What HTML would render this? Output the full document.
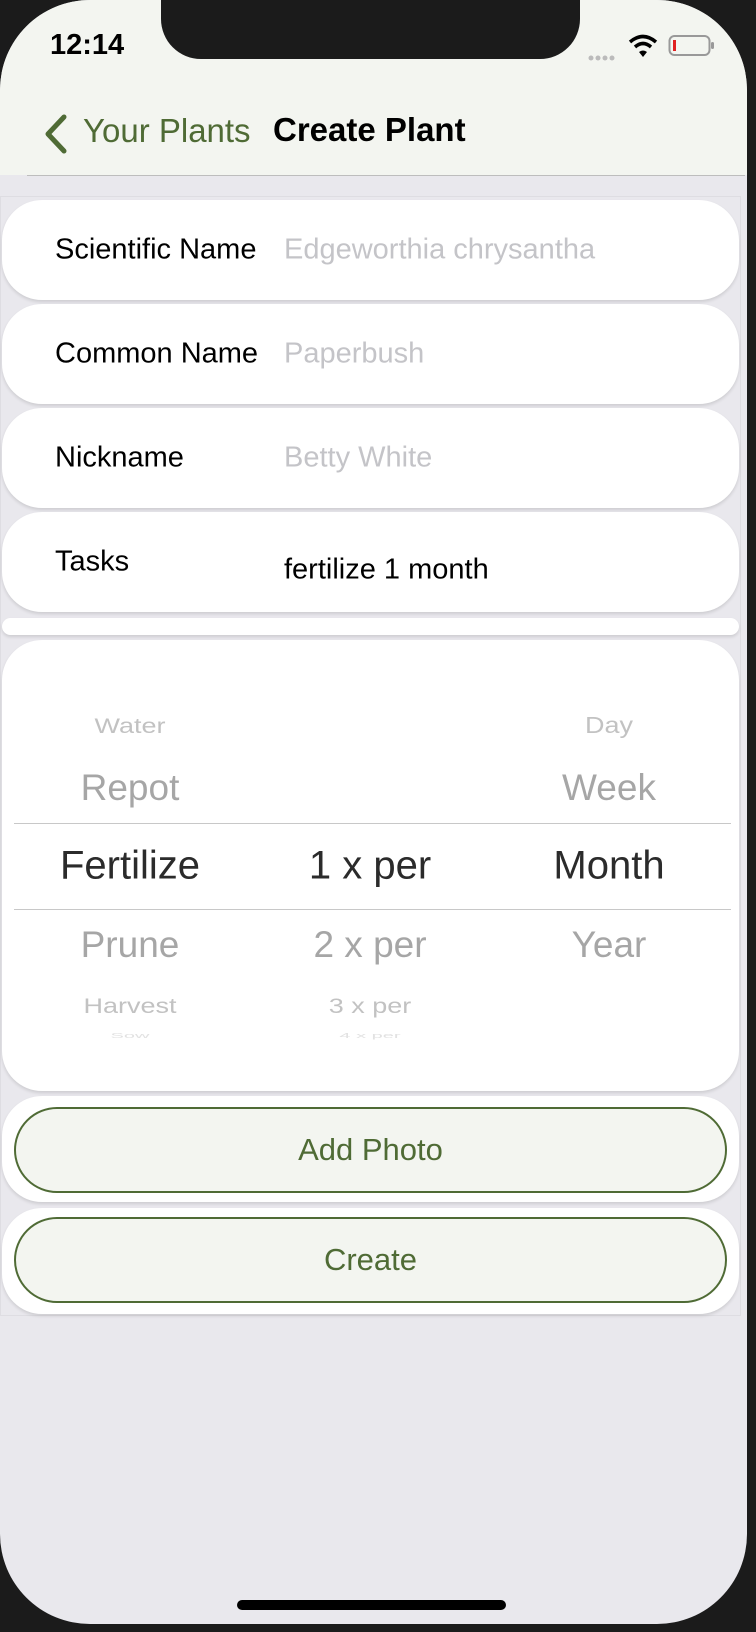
<!DOCTYPE html>
<html><head><meta charset="utf-8"><style>
*{margin:0;padding:0;box-sizing:border-box}
body{width:756px;height:1632px;background:#1b1b1b;position:relative;overflow:hidden;font-family:"Liberation Sans",sans-serif}
.screen{position:absolute;left:0;top:0;width:747px;height:1624px;background:#e9e8ed;border-radius:90px;overflow:hidden}
.nav{position:absolute;left:0;top:0;width:747px;height:175px;background:#f3f5f0}
.sep{position:absolute;left:27px;top:175px;width:718px;height:1px;background:#bdbdbd}
.notch{position:absolute;left:161px;top:-2px;width:419px;height:61px;background:#1b1b1b;border-radius:0 0 40px 40px}
.abs{position:absolute;white-space:nowrap}
.card{position:absolute;left:2px;width:737px;background:#fff;border-radius:40px;box-shadow:0 2px 3px rgba(0,0,0,.12)}
.lbl{position:absolute;left:53px;font-size:29px;color:#000;transform:translateY(-50%)}
.ph{position:absolute;left:282px;font-size:29px;color:#c4c4c8;transform:translateY(-50%)}
.pk{position:absolute;transform:translate(-50%,-50%);white-space:nowrap}
.btn{position:absolute;left:14px;width:713px;height:86px;border:2px solid #4f6b35;border-radius:43px;background:#f3f5f0;color:#4f6b35;font-size:31px;text-align:center;line-height:82px}
.line{position:absolute;left:12px;width:717px;height:1px;background:#c8c8c8}
</style></head><body>
<div class="screen">
 <div class="nav"></div>
 <div class="sep"></div>
 <div class="notch"></div>
 <div class="abs" style="left:50px;top:29px;font-size:29px;font-weight:bold;color:#000">12:14</div>
 <div class="abs" style="left:588px;top:49px;">
  <svg width="28" height="8"><circle cx="3" cy="4" r="2.5" fill="#bbb"/><circle cx="10" cy="4" r="2.5" fill="#bbb"/><circle cx="17" cy="4" r="2.5" fill="#bbb"/><circle cx="24" cy="4" r="2.5" fill="#bbb"/></svg>
 </div>
 <svg class="abs" style="left:628px;top:34px" width="30" height="24" viewBox="0 0 30 24"><path d="M2 8 Q15 -3 28 8" stroke="#000" stroke-width="3.5" fill="none"/><path d="M7 13 Q15 6 23 13" stroke="#000" stroke-width="3.5" fill="none"/><path d="M11 18 L15 23 L19 18 Q15 15 11 18Z" fill="#000"/></svg>
 <svg class="abs" style="left:668px;top:34px" width="48" height="24" viewBox="0 0 48 24"><rect x="1.5" y="2" width="40" height="19" rx="5" fill="none" stroke="#999" stroke-width="2"/><rect x="5" y="6" width="3" height="11" fill="#e02020"/><rect x="43" y="8" width="3" height="7" rx="1.5" fill="#999"/></svg>
 <svg class="abs" style="left:42px;top:114px" width="30" height="40" viewBox="0 0 30 40"><path d="M22 3 L6 20 L22 37" stroke="#4f6b35" stroke-width="5" fill="none" stroke-linecap="round" stroke-linejoin="round"/></svg>
 <div class="abs" style="left:83px;top:112px;font-size:33px;color:#4f6b35">Your Plants</div>
 <div class="abs" style="left:273px;top:111px;font-size:33px;font-weight:bold;color:#000">Create Plant</div>

 <div class="abs" style="left:0;top:196px;width:741px;height:1120px;border:1px solid #dedde2;background:#e9e8ed"></div>
 <div class="card" style="top:200px;height:100px"><div class="lbl" style="top:50px">Scientific Name</div><div class="ph" style="top:50px">Edgeworthia chrysantha</div></div>
 <div class="card" style="top:304px;height:100px"><div class="lbl" style="top:50px">Common Name</div><div class="ph" style="top:50px">Paperbush</div></div>
 <div class="card" style="top:408px;height:100px"><div class="lbl" style="top:50px">Nickname</div><div class="ph" style="top:50px">Betty White</div></div>
 <div class="card" style="top:512px;height:100px"><div class="lbl" style="top:50px">Tasks</div><div class="ph" style="top:58px;color:#000">fertilize 1 month</div></div>
 <div class="card" style="top:618px;height:17px;border-radius:9px"></div>
 <div class="card" style="top:640px;height:451px">
  <div class="line" style="top:183px"></div><div class="line" style="top:269px"></div>
  <div class="pk" style="left:128px;top:86px;font-size:27px;color:#c2c2c2;transform:translate(-50%,-50%) scaleY(.8)">Water</div>
  <div class="pk" style="left:607px;top:86px;font-size:27px;color:#c2c2c2;transform:translate(-50%,-50%) scaleY(.85)">Day</div>
  <div class="pk" style="left:128px;top:148px;font-size:37px;color:#a6a6a6">Repot</div>
  <div class="pk" style="left:607px;top:148px;font-size:37px;color:#a6a6a6">Week</div>
  <div class="pk" style="left:128px;top:226px;font-size:40px;color:#2b2b2b">Fertilize</div>
  <div class="pk" style="left:368px;top:226px;font-size:40px;color:#2b2b2b">1 x per</div>
  <div class="pk" style="left:607px;top:226px;font-size:40px;color:#2b2b2b">Month</div>
  <div class="pk" style="left:128px;top:305px;font-size:37px;color:#a6a6a6">Prune</div>
  <div class="pk" style="left:368px;top:305px;font-size:37px;color:#a6a6a6">2 x per</div>
  <div class="pk" style="left:607px;top:305px;font-size:37px;color:#a6a6a6">Year</div>
  <div class="pk" style="left:128px;top:366px;font-size:27px;color:#c2c2c2;transform:translate(-50%,-50%) scaleY(.8)">Harvest</div>
  <div class="pk" style="left:368px;top:366px;font-size:27px;color:#c2c2c2;transform:translate(-50%,-50%) scaleY(.8)">3 x per</div>
  <div class="pk" style="left:128px;top:396px;font-size:20px;color:#e2e2e2;transform:translate(-50%,-50%) scaleY(.35)">Sow</div>
  <div class="pk" style="left:368px;top:396px;font-size:20px;color:#e2e2e2;transform:translate(-50%,-50%) scaleY(.35)">4 x per</div>
 </div>
 <div class="card" style="top:1096px;height:106px"></div>
 <div class="btn" style="top:1107px">Add Photo</div>
 <div class="card" style="top:1208px;height:106px"></div>
 <div class="btn" style="top:1217px">Create</div>
 <div class="abs" style="left:237px;top:1600px;width:269px;height:10px;background:#000;border-radius:5px"></div>
</div>
</body></html>
